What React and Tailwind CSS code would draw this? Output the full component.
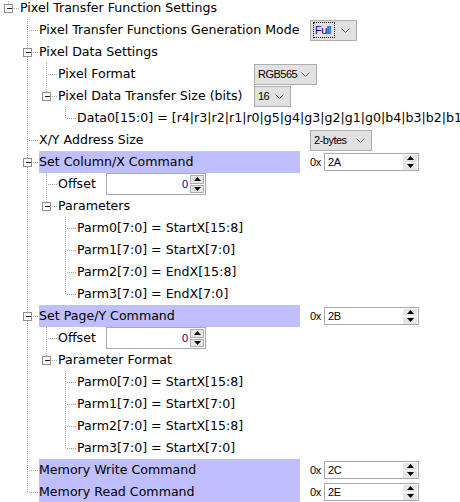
import React from "react";

// tree guide columns and text starts, per level
const COL = [8, 27, 46, 65];
const TXT = [20, 39, 58, 77];

function Guides({ lvl, last, box, open, anc = [] }) {
    const w = TXT[lvl];
    const own = COL[lvl];
    return (
        <svg width={w} height={22} className="shrink-0" shapeRendering="crispEdges">
            <g stroke="#a0a0a0" strokeWidth="1" strokeDasharray="1 1">
                {anc.map((a) => (
                    <line key={a} x1={COL[a] + 0.5} x2={COL[a] + 0.5} y1={0} y2={22} />
                ))}
                <line x1={own + 0.5} x2={own + 0.5} y1={0} y2={last ? 12 : 22} />
                <line x1={box ? own + 6 : own + 2} x2={w - 1} y1={11.5} y2={11.5} />
                {open && <line x1={COL[lvl + 1] + 0.5} x2={COL[lvl + 1] + 0.5} y1={14} y2={22} />}
            </g>
            {box && (
                <g>
                    <rect x={own - 3.5} y={7.5} width={8} height={8} fill="#fff" stroke="#8f8f8f" />
                    <line x1={own - 1} x2={own + 4} y1={11.5} y2={11.5} stroke="#222" />
                </g>
            )}
        </svg>
    );
}

function Chevron() {
    return (
        <svg width="9" height="5" viewBox="0 0 9 5" className="shrink-0">
            <polyline points="0.5,0.5 4.5,4.5 8.5,0.5" fill="none" stroke="#606060" strokeWidth="1" />
        </svg>
    );
}

function Combo({ text, width, focus }) {
    return (
        <div
            className={
                "flex h-[21px] items-center justify-between border border-[#adadad] bg-[#e1e1e1] pl-[2px] pr-[6px] font-['Liberation_Sans',sans-serif] text-[11px] tracking-[-0.5px] " +
                width
            }
        >
            {focus ? (
                <span className="border border-dotted border-black pl-[1px] pr-[3px] leading-[14px] text-[#000080]">
                    {text}
                </span>
            ) : (
                <span className="pl-[1px] text-black">{text}</span>
            )}
            <Chevron />
        </div>
    );
}

function SpinButtons({ framed }) {
    return (
        <div className={"flex w-[14px] flex-col " + (framed ? "h-[18px] gap-[1px]" : "h-[15px] gap-[1px]")}>
            <div
                className={
                    "flex flex-1 items-center justify-center bg-[#e6e6e6] " +
                    (framed ? "border border-[#adadad]" : "")
                }
            >
                <svg width="7" height="4" viewBox="0 0 7 4">
                    <polygon points="0,4 3.5,0 7,4" fill="#000" />
                </svg>
            </div>
            <div
                className={
                    "flex flex-1 items-center justify-center bg-[#e6e6e6] " +
                    (framed ? "border border-[#adadad]" : "")
                }
            >
                <svg width="7" height="4" viewBox="0 0 7 4">
                    <polygon points="0,0 7,0 3.5,4" fill="#000" />
                </svg>
            </div>
        </div>
    );
}

function HexSpin({ value }) {
    return (
        <div className="flex items-center font-['Liberation_Sans',sans-serif] text-[11px] tracking-[-0.4px] text-black">
            <span className="w-[14px]">0x</span>
            <div className="flex h-[18px] w-[95px] items-center justify-between border border-[#a9a9a9] bg-white pl-[3px] pr-[1px]">
                <span>{value}</span>
                <SpinButtons />
            </div>
        </div>
    );
}

function OffsetSpin() {
    return (
        <div className="flex h-[22px] w-[100px] items-center justify-end gap-[2px] border border-[#a9a9a9] bg-white pr-[1px] font-['Liberation_Sans',sans-serif] text-[11px] text-[#00006a]">
            <span>0</span>
            <SpinButtons framed />
        </div>
    );
}

function Row({ lvl, last, box, open, anc, label, labelW, hi, ctrl }) {
    return (
        <div className="flex h-[22px] items-center whitespace-nowrap">
            <Guides lvl={lvl} last={last} box={box} open={open} anc={anc} />
            <div className={"shrink-0 leading-[22px] " + (labelW || "") + (hi ? " bg-[#bfbfff]" : "")}>
                {label}
            </div>
            {ctrl && <div className="ml-[10px] flex shrink-0 items-center">{ctrl}</div>}
        </div>
    );
}

const parmsX = ["StartX[15:8]", "StartX[7:0]", "EndX[15:8]", "EndX[7:0]"];
const parmsY = ["StartX[15:8]", "StartX[7:0]", "StartX[15:8]", "StartX[7:0]"];

export default function App() {
    return (
        <div className="h-[502px] w-[460px] overflow-hidden bg-white font-['DejaVu_Sans',sans-serif] text-[12.6px] text-black">
            <div className="-mt-[3px] flex flex-col">
                <Row lvl={0} last box open label="Pixel Transfer Function Settings" />
                <Row
                    lvl={1}
                    label="Pixel Transfer Functions Generation Mode"
                    labelW="w-[261px]"
                    ctrl={<Combo text="Full" width="w-[47px]" focus />}
                />
                <Row lvl={1} box open label="Pixel Data Settings" />
                <Row
                    lvl={2}
                    anc={[1]}
                    label="Pixel Format"
                    labelW="w-[186px]"
                    ctrl={<Combo text="RGB565" width="w-[63px]" />}
                />
                <Row
                    lvl={2}
                    anc={[1]}
                    last
                    box
                    open
                    label="Pixel Data Transfer Size (bits)"
                    labelW="w-[186px]"
                    ctrl={<Combo text="16" width="w-[37px]" />}
                />
                <Row
                    lvl={3}
                    anc={[1]}
                    last
                    label="Data0[15:0] = [r4|r3|r2|r1|r0|g5|g4|g3|g2|g1|g0|b4|b3|b2|b1|b0]"
                />
                <Row
                    lvl={1}
                    label="X/Y Address Size"
                    labelW="w-[261px]"
                    ctrl={<Combo text="2-bytes" width="w-[62px]" />}
                />
                <Row
                    lvl={1}
                    box
                    open
                    hi
                    label="Set Column/X Command"
                    labelW="w-[261px]"
                    ctrl={<HexSpin value="2A" />}
                />
                <Row lvl={2} anc={[1]} label="Offset" labelW="w-[38px]" ctrl={<OffsetSpin />} />
                <Row lvl={2} anc={[1]} last box open label="Parameters" />
                {parmsX.map((p, i) => (
                    <Row key={i} lvl={3} anc={[1]} last={i === 3} label={`Parm${i}[7:0] = ${p}`} />
                ))}
                <Row
                    lvl={1}
                    box
                    open
                    hi
                    label="Set Page/Y Command"
                    labelW="w-[261px]"
                    ctrl={<HexSpin value="2B" />}
                />
                <Row lvl={2} anc={[1]} label="Offset" labelW="w-[38px]" ctrl={<OffsetSpin />} />
                <Row lvl={2} anc={[1]} last box open label="Parameter Format" />
                {parmsY.map((p, i) => (
                    <Row key={i} lvl={3} anc={[1]} last={i === 3} label={`Parm${i}[7:0] = ${p}`} />
                ))}
                <Row
                    lvl={1}
                    hi
                    label="Memory Write Command"
                    labelW="w-[261px]"
                    ctrl={<HexSpin value="2C" />}
                />
                <Row
                    lvl={1}
                    last
                    hi
                    label="Memory Read Command"
                    labelW="w-[261px]"
                    ctrl={<HexSpin value="2E" />}
                />
            </div>
        </div>
    );
}
